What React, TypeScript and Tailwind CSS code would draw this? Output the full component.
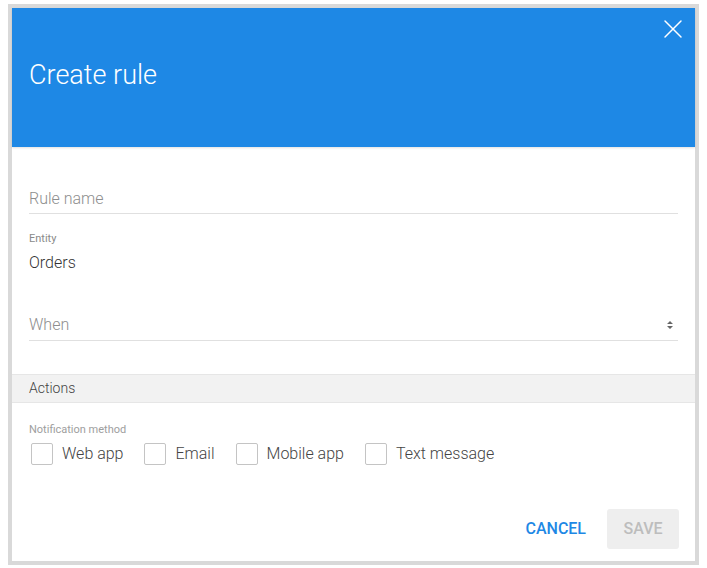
import { X } from "lucide-react";

const METHODS = ["Web app", "Email", "Mobile app", "Text message"];

function Checkbox({ label }: { label: string }) {
  return (
    <label className="flex items-center gap-[9px] text-[16px] font-light text-[#444]">
      <span className="h-[22px] w-[22px] rounded-[2px] border border-[#c4c4c4] bg-white" />
      {label}
    </label>
  );
}

export default function App() {
  return (
    <div className="h-[568px] w-[707px] bg-white pl-[8px] pt-[4px] font-['Roboto',sans-serif]">
      <div className="flex h-[561px] w-[691px] flex-col border-4 border-[#d9d9d9] bg-white">
        <header className="relative h-[139px] bg-[#1e88e5] px-[17px] pt-[52px] shadow-[0_1px_2px_rgba(0,0,0,0.12)]">
          <h1 className="text-[27px] font-light leading-[30px] text-white">Create rule</h1>
          <button
            type="button"
            aria-label="Close"
            className="absolute right-[6px] top-[5px] text-white"
          >
            <X className="h-[32px] w-[32px]" strokeWidth={1.1} />
          </button>
        </header>

        <div className="flex flex-col px-[17px] pt-[41px]">
          <div className="border-b border-[#e0e0e0] pb-[3px] text-[16px] font-light leading-[22px] text-[#8e8e8e]">
            Rule name
          </div>
          <div className="mt-[18px] text-[11px] leading-[14px] text-[#8a8a8a]">Entity</div>
          <div className="mt-[7px] text-[16px] font-light leading-[20px] text-[#333]">Orders</div>
          <div className="mt-[41px] flex items-center justify-between border-b border-[#e0e0e0] pb-[4px]">
            <span className="text-[16px] font-light leading-[22px] text-[#8e8e8e]">When</span>
            <svg width="8" height="10" viewBox="0 0 8 10" className="mr-[4px]">
              <path d="M4 1 L7 4 H1 Z M4 9 L7 6 H1 Z" fill="#666" />
            </svg>
          </div>
        </div>

        <div className="mt-[33px] h-[29px] border-y border-[#e6e6e6] bg-[#f2f2f2] px-[17px] text-[14px] font-light leading-[27px] text-[#444]">
          Actions
        </div>

        <div className="px-[17px] pt-[20px]">
          <div className="text-[11px] leading-[14px] text-[#9e9e9e]">Notification method</div>
          <div className="mt-[5px] flex gap-[21px] pl-[2px]">
            {METHODS.map((m) => (
              <Checkbox key={m} label={m} />
            ))}
          </div>
        </div>

        <div className="mt-auto flex items-center justify-end gap-[21px] px-[16px] pb-[12px]">
          <button type="button" className="text-[16px] font-medium text-[#1e88e5]">
            CANCEL
          </button>
          <button
            type="button"
            disabled
            className="h-[40px] w-[72px] rounded-[3px] bg-[#eeeeee] text-[16px] font-medium text-[#bdbdbd]"
          >
            SAVE
          </button>
        </div>
      </div>
    </div>
  );
}
